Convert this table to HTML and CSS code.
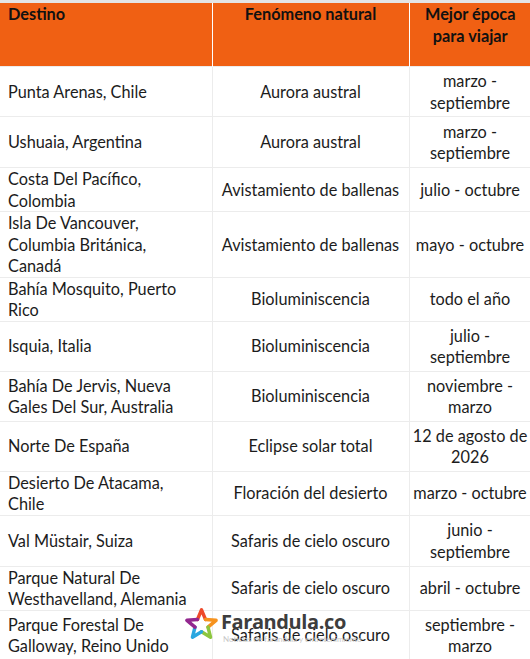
FILE: index.html
```html
<!DOCTYPE html>
<html lang="es">
<head>
<meta charset="utf-8">
<title>Fenómenos naturales</title>
<link rel="stylesheet" href="styles.css">
</head>
<body>
<div class="page">
  <div class="topbar"></div>
  <table class="tbl">
    <colgroup><col class="c1"><col class="c2"><col class="c3"></colgroup>
    <thead>
      <tr class="head">
        <th class="left">Destino</th>
        <th>Fenómeno natural</th>
        <th>Mejor época para viajar</th>
      </tr>
    </thead>
    <tbody>
      <tr class="h50"><td class="left">Punta Arenas, Chile</td><td>Aurora austral</td><td>marzo - septiembre</td></tr>
      <tr class="h51"><td class="left">Ushuaia, Argentina</td><td>Aurora austral</td><td>marzo - septiembre</td></tr>
      <tr class="h44"><td class="left">Costa Del Pacífico, Colombia</td><td>Avistamiento de ballenas</td><td>julio - octubre</td></tr>
      <tr class="h66"><td class="left">Isla De Vancouver, Columbia Británica, Canadá</td><td>Avistamiento de ballenas</td><td>mayo - octubre</td></tr>
      <tr class="h44"><td class="left">Bahía Mosquito, Puerto Rico</td><td>Bioluminiscencia</td><td>todo el año</td></tr>
      <tr class="h50"><td class="left">Isquia, Italia</td><td>Bioluminiscencia</td><td>julio - septiembre</td></tr>
      <tr class="h50"><td class="left">Bahía De Jervis, Nueva Gales Del Sur, Australia</td><td>Bioluminiscencia</td><td>noviembre - marzo</td></tr>
      <tr class="h50"><td class="left">Norte De España</td><td>Eclipse solar total</td><td>12 de agosto de 2026</td></tr>
      <tr class="h44"><td class="left">Desierto De Atacama, Chile</td><td>Floración del desierto</td><td>marzo - octubre</td></tr>
      <tr class="h51"><td class="left">Val Müstair, Suiza</td><td>Safaris de cielo oscuro</td><td>junio - septiembre</td></tr>
      <tr class="h44"><td class="left">Parque Natural De Westhavelland, Alemania</td><td>Safaris de cielo oscuro</td><td>abril - octubre</td></tr>
      <tr class="h50"><td class="left">Parque Forestal De Galloway, Reino Unido</td><td>Safaris de cielo oscuro</td><td>septiembre - marzo</td></tr>
    </tbody>
  </table>
  <div class="logo">
    <svg class="star" width="33" height="34" viewBox="-1 -1 34 34" aria-hidden="true">
      <g fill="none" stroke-width="3.6" stroke-linejoin="round" stroke-linecap="round">
        <polyline points="11.9,11.3 16,1.5 20.1,11.3" stroke="#ee4a2b"/>
        <polyline points="20.1,11.3 31,12.2 22.7,19.2" stroke="#f6921e"/>
        <polyline points="22.7,19.2 25.3,29.6 16,24" stroke="#8cc63f"/>
        <polyline points="16,24 6.7,29.6 9.3,19.2" stroke="#2aa7e0"/>
        <polyline points="9.3,19.2 1,12.2 11.9,11.3" stroke="#93278f"/>
      </g>
    </svg>
    <div class="brandbox">
      <span class="brand">Farandula.co</span>
      <span class="tagline">Noticias de farándula y entretenimiento</span>
    </div>
  </div>
</div>
</body>
</html>
```
FILE: styles.css
```css
html, body {
  margin: 0;
  padding: 0;
  background: #ffffff;
}
.page {
  position: relative;
  width: 530px;
  height: 659px;
  overflow: hidden;
  font-family: Lato, "Open Sans", Arial, sans-serif;
  font-size: 16.3px;
  line-height: 21.5px;
  color: #1c1c1c;
}
.topbar {
  height: 3px;
  background: #e4e4e4;
}
.tbl {
  width: 531px;
  border-collapse: collapse;
  table-layout: fixed;
}
.c1 { width: 212px; }
.c2 { width: 197px; }
.c3 { width: 122px; }
.head th {
  height: 63px;
  background: #f06013;
  color: #111;
  font-weight: bold;
  line-height: 22px;
  vertical-align: top;
  text-align: center;
  padding: 0 4px;
  border-left: 1px solid #ffffff;
}
.head th:first-child { border-left: none; }
.tbl th.left, .tbl td.left {
  text-align: left;
  padding-left: 8px;
}
.tbl td.left {
  padding-right: 24px;
}
.tbl td {
  text-align: center;
  vertical-align: middle;
  padding: 0 3px;
  border: 1px solid #ececec;
}
.tbl td:first-child { border-left: none; }
.h44 td { height: 43px; }
.h50 td { height: 49px; }
.h51 td { height: 50px; }
.h66 td { height: 64px; }
.logo {
  position: absolute;
  left: 185px;
  top: 607px;
  display: flex;
  align-items: flex-start;
  gap: 3px;
}
.brandbox {
  display: flex;
  flex-direction: column;
  padding-top: 2px;
}
.brand {
  font-family: "Open Sans", Arial, sans-serif;
  font-weight: bold;
  font-size: 20px;
  line-height: 26px;
  color: #3d3d3d;
  letter-spacing: -0.4px;
}
.tagline {
  font-size: 8px;
  line-height: 9px;
  color: #c8c8c8;
  margin-left: 2px;
}
```
